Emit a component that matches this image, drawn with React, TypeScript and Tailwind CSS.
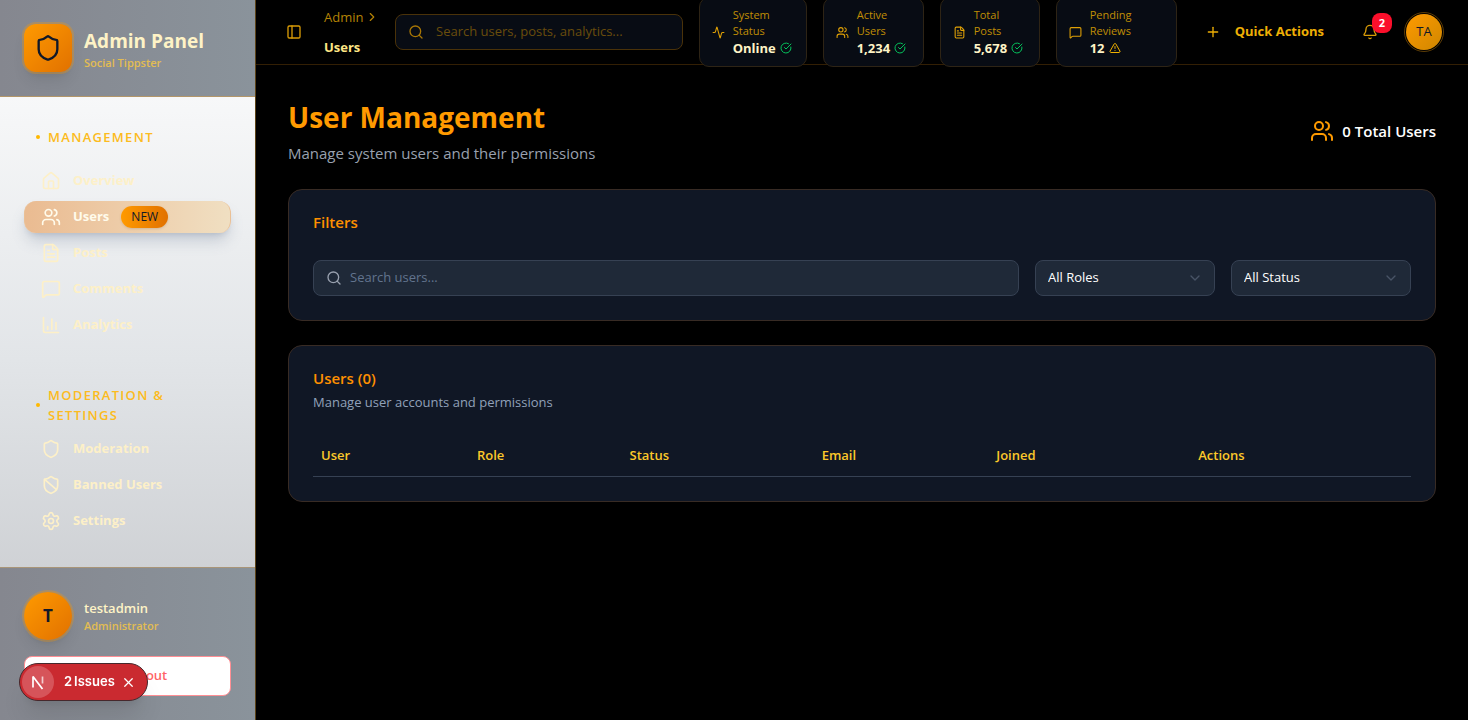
import React from "react";
import {
  Activity, Bell, ChartColumn, ChevronDown, ChevronRight, CircleCheckBig, FileText, House, LogOut,
  MessageSquare, PanelLeft, Plus, Search, Settings, Shield, ShieldBan, TriangleAlert, Users, X,
  type LucideIcon,
} from "lucide-react";

type NavItem = { label: string; icon: LucideIcon; active?: boolean; badge?: string };

const groups: { title: string; items: NavItem[] }[] = [
  {
    title: "Management",
    items: [
      { label: "Overview", icon: House },
      { label: "Users", icon: Users, active: true, badge: "NEW" },
      { label: "Posts", icon: FileText },
      { label: "Comments", icon: MessageSquare },
      { label: "Analytics", icon: ChartColumn },
    ],
  },
  {
    title: "Moderation & Settings",
    items: [
      { label: "Moderation", icon: Shield },
      { label: "Banned Users", icon: ShieldBan },
      { label: "Settings", icon: Settings },
    ],
  },
];

const stats: { lines: [string, string]; value: string; icon: LucideIcon; width: string; warn?: boolean }[] = [
  { lines: ["System", "Status"], value: "Online", icon: Activity, width: "w-[108px]" },
  { lines: ["Active", "Users"], value: "1,234", icon: Users, width: "w-[101px]" },
  { lines: ["Total", "Posts"], value: "5,678", icon: FileText, width: "w-[100px]" },
  { lines: ["Pending", "Reviews"], value: "12", icon: MessageSquare, width: "w-[121px]", warn: true },
];

const columns = [
  { label: "User", width: "w-[14.2%]" },
  { label: "Role", width: "w-[13.9%]" },
  { label: "Status", width: "w-[17.5%]" },
  { label: "Email", width: "w-[15.9%]" },
  { label: "Joined", width: "w-[18.4%]" },
  { label: "Actions", width: "w-[20.1%]" },
];

function NavLink({ item }: { item: NavItem }) {
  const Icon = item.icon;
  return (
    <a
      href="#"
      aria-current={item.active ? "page" : undefined}
      className={
        item.active
          ? "flex h-8 items-center gap-3 rounded-xl border-x border-[#eac096] bg-linear-to-r from-[#eabb91] to-[#f0dfc2] px-4 text-[#fffbeb] shadow-lg shadow-slate-500/30"
          : "flex h-8 items-center gap-3 rounded-xl border-x border-transparent px-4 text-[#fdf0c8]"
      }
    >
      <Icon size={20} strokeWidth={2} />
      <span className="text-[13px] font-bold">{item.label}</span>
      {item.badge && (
        <span className="rounded-full bg-linear-to-r from-[#ff9a00] to-[#e17100] px-2.5 py-0.5 text-[12px] leading-[18px] font-medium text-gray-900 shadow-sm">
          {item.badge}
        </span>
      )}
    </a>
  );
}

function Sidebar() {
  return (
    <aside className="flex w-64 shrink-0 flex-col border-r border-[#5c4318] bg-linear-to-b from-white via-[#e2e5e8] to-[#c2c4c8]">
      <div className="flex h-[97px] items-center gap-3 border-b border-[#b39669] bg-linear-to-r from-[#85878f] to-[#8a939b] px-6">
        <div className="flex size-12 items-center justify-center rounded-xl bg-linear-to-br from-[#ff9a00] to-[#e17100] text-gray-900 shadow-lg ring-2 ring-amber-500/30">
          <Shield size={28} />
        </div>
        <div className="pt-1.5">
          <div className="text-[19px] leading-6 font-bold text-[#fef3c6]">Admin Panel</div>
          <div className="text-[11px] leading-5 font-semibold text-[#e3bd52]">Social Tippster</div>
        </div>
      </div>
      <nav className="flex flex-1 flex-col gap-12 p-6">
        {groups.map((group) => (
          <div key={group.title} className="flex flex-col gap-3">
            <h2 className="flex h-8 items-center gap-2 px-3 text-[13px] leading-5 font-semibold tracking-widest text-[#fcbb20] uppercase">
              <span className="size-1 shrink-0 rounded-full bg-[#ffb900]" />
              {group.title}
            </h2>
            <ul className="flex flex-col gap-1">
              {group.items.map((item) => (
                <li key={item.label}>
                  <NavLink item={item} />
                </li>
              ))}
            </ul>
          </div>
        ))}
      </nav>
      <div className="flex flex-col gap-4 border-t border-[#a99578] bg-linear-to-r from-[#85878f] to-[#8a939b] p-6">
        <div className="flex items-center gap-3">
          <div className="flex size-12 items-center justify-center rounded-full bg-linear-to-br from-[#ff9a00] to-[#e17100] text-[17px] font-bold text-gray-900 shadow-lg ring-2 ring-amber-500/30">
            T
          </div>
          <div>
            <div className="text-[13px] leading-5 font-semibold text-[#fef3c6]">testadmin</div>
            <div className="text-[11px] leading-4 font-semibold text-[#e3bd52]">Administrator</div>
          </div>
        </div>
        <button className="flex h-10 items-center justify-center gap-4 rounded-lg border border-[#ff8f94] bg-white text-[13px] font-semibold text-[#ff6467]">
          <LogOut size={20} />
          Logout
        </button>
      </div>
    </aside>
  );
}

function Header() {
  return (
    <header className="flex h-[65px] items-center border-b border-[#331f04] px-6">
      <button aria-label="Toggle sidebar" className="flex size-7 shrink-0 items-center justify-center text-[#d99b06]">
        <PanelLeft size={16} />
      </button>
      <nav aria-label="Breadcrumb" className="ml-4 flex w-[51px] shrink-0 flex-col gap-2.5 text-[13px] leading-5">
        <a href="#" className="flex items-center gap-0.5 text-[#b58305]">
          Admin
          <ChevronRight size={14} className="shrink-0" />
        </a>
        <span className="font-bold text-[#fee685]">Users</span>
      </nav>
      <label className="ml-5 flex h-9 min-w-40 flex-1 items-center gap-3 rounded-lg border border-[#4a3209] bg-[#080c14] px-3 text-[#a97705]">
        <Search size={16} className="shrink-0" />
        <input
          type="search"
          aria-label="Search users, posts, analytics"
          placeholder="Search users, posts, analytics..."
          className="min-w-0 flex-1 bg-transparent text-[13px] outline-none placeholder:text-[#6a4d0c]"
        />
      </label>
      <div className="ml-4 flex shrink-0 gap-4">
        {stats.map(({ lines, value, icon: Icon, width, warn }) => (
          <div
            key={value}
            className={`flex h-[70px] items-center gap-2 rounded-[10px] border border-[#2e2415] bg-[#080c14] px-3 ${width}`}
          >
            <Icon size={13} className="shrink-0 text-[#dfa006]" />
            <div>
              <div className="text-[11px] leading-4 text-[#c08e05]">
                {lines[0]}
                <br />
                {lines[1]}
              </div>
              <div className="flex items-center gap-1 text-[13px] leading-[18px] font-bold text-[#fef3c6]">
                {value}
                {warn ? (
                  <TriangleAlert size={12} className="text-[#f0b100]" />
                ) : (
                  <CircleCheckBig size={12} className="text-[#05c35c]" />
                )}
              </div>
            </div>
          </div>
        ))}
      </div>
      <button className="ml-4 flex h-9 shrink-0 items-center gap-3.5 px-3 text-[13px] font-bold text-[#eeaf05]">
        <Plus size={16} />
        Quick Actions
      </button>
      <button aria-label="Notifications, 2 unread" className="relative ml-4 flex size-9 shrink-0 items-center justify-center text-[#d99b06]">
        <Bell size={16} />
        <span className="absolute -top-px -right-1 flex size-5 items-center justify-center rounded-lg bg-[#fb0f2b] text-[11px] font-bold text-white">
          2
        </span>
      </button>
      <button className="ml-4 flex size-10 shrink-0 items-center justify-center rounded-full border border-[#5c3c06] p-px">
        <span className="flex size-9 items-center justify-center rounded-full bg-linear-to-br from-[#ff9a00] to-[#d08700] text-[13px] font-medium text-gray-900">
          TA
        </span>
      </button>
    </header>
  );
}

function FilterSelect({ label, options }: { label: string; options: string[] }) {
  return (
    <div className="relative w-[180px] shrink-0">
      <select
        aria-label={label}
        className="h-9 w-full appearance-none rounded-lg border border-[#364153] bg-[#1f2938] px-3 text-[13px] text-white"
      >
        {options.map((o) => (
          <option key={o}>{o}</option>
        ))}
      </select>
      <ChevronDown size={16} className="pointer-events-none absolute top-2.5 right-3 text-[#485466]" />
    </div>
  );
}

const panel = "rounded-[14px] border border-[#382b24] bg-[#101725] p-6";

function UsersPage() {
  return (
    <main className="flex flex-col gap-6 p-8">
      <div className="flex items-center justify-between">
        <div>
          <h1 className="text-[28px] leading-10 font-bold text-[#ff9a00]">User Management</h1>
          <p className="mt-1 text-[15px] leading-6 text-[#99a1af]">Manage system users and their permissions</p>
        </div>
        <div className="flex items-center gap-2">
          <Users size={24} className="text-[#fe9a00]" />
          <span className="text-[15px] font-semibold text-white">0 Total Users</span>
        </div>
      </div>

      <section className={panel}>
        <h2 className="text-[15px] leading-4 font-semibold text-[#ff9000]">Filters</h2>
        <div className="mt-[30px] flex gap-4">
          <label className="flex h-9 flex-1 items-center gap-2 rounded-lg border border-[#364153] bg-[#1f2938] px-3 text-[#99a1af]">
            <Search size={16} className="shrink-0" />
            <input
              type="search"
              aria-label="Search users"
              placeholder="Search users..."
              className="min-w-0 flex-1 bg-transparent text-[13px] text-white outline-none placeholder:text-[#62748e]"
            />
          </label>
          <FilterSelect label="Role" options={["All Roles", "Admin", "Moderator", "User"]} />
          <FilterSelect label="Status" options={["All Status", "Active", "Banned"]} />
        </div>
      </section>

      <section className={panel}>
        <h2 className="text-[15px] leading-4 font-semibold text-[#ff9000]">Users (0)</h2>
        <p className="mt-1.5 text-[13px] leading-5 text-[#90a1b9]">Manage user accounts and permissions</p>
        <table className="mt-6 w-full table-fixed">
          <thead>
            <tr className="h-10 border-b border-[#364153] text-left text-[13px] text-[#fcc82a]">
              {columns.map((c) => (
                <th key={c.label} scope="col" className={`px-2 font-semibold ${c.width}`}>
                  {c.label}
                </th>
              ))}
            </tr>
          </thead>
          <tbody />
        </table>
      </section>
    </main>
  );
}

function IssuesBadge() {
  return (
    <div className="fixed bottom-[19px] left-[19px] flex h-[38px] items-center rounded-full border border-[#46282c] bg-[#ca2a30] px-0.5 font-['Inter',sans-serif] text-white shadow-xl">
      <span className="flex size-8 items-center justify-center rounded-full bg-[#d6545a]">
        <svg width="16" height="16" viewBox="0 0 16 16" fill="none" aria-hidden="true">
          <path d="M3 13.5V2.5L12.5 15" stroke="white" strokeWidth="1.7" strokeLinejoin="bevel" />
          <path d="M12.5 2.5V9.5" stroke="white" strokeOpacity="0.7" strokeWidth="1.7" />
        </svg>
      </span>
      <button className="ml-2.5 flex gap-0.5 text-[13px] font-semibold">
        <span>2</span>
        <span>Issues</span>
      </button>
      <button aria-label="Close" className="mr-2 ml-1.5 flex size-4 items-center justify-center">
        <X size={15} />
      </button>
    </div>
  );
}

export default function App() {
  return (
    <div className="flex min-h-screen bg-black font-['Open_Sans','Noto_Sans',sans-serif]">
      <Sidebar />
      <div className="min-w-0 flex-1">
        <Header />
        <UsersPage />
      </div>
      <IssuesBadge />
    </div>
  );
}
